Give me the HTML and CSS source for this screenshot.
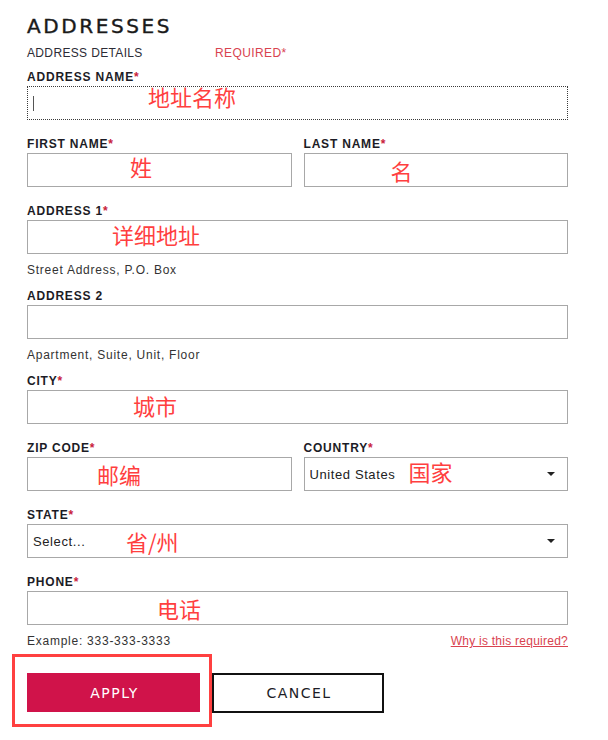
FILE: index.html
```html
<!DOCTYPE html>
<html lang="en">
<head>
    <meta charset="UTF-8">
    <meta name="viewport" content="width=device-width, initial-scale=1.0">
    <title>Addresses</title>
    <link rel="stylesheet" href="styles.css">
</head>
<body>

    <div class="page">
        <h1 class="title">ADDRESSES</h1>

        <div class="subhead">
            <span class="subhead-title">ADDRESS DETAILS</span>
            <span class="subhead-req">REQUIRED*</span>
        </div>

        <form class="address-form">
            <div class="field">
                <label class="label" for="address-name">ADDRESS NAME<span class="req">*</span></label>
                <div class="control">
                    <input class="input is-focused" type="text" id="address-name">
                    <span class="caret"></span>
                    <span class="note note-name">地址名称</span>
                </div>
            </div>

            <div class="row">
                <div class="field">
                    <label class="label" for="first-name">FIRST NAME<span class="req">*</span></label>
                    <div class="control">
                        <input class="input" type="text" id="first-name">
                        <span class="note note-first">姓</span>
                    </div>
                </div>
                <div class="field">
                    <label class="label" for="last-name">LAST NAME<span class="req">*</span></label>
                    <div class="control">
                        <input class="input" type="text" id="last-name">
                        <span class="note note-last">名</span>
                    </div>
                </div>
            </div>

            <div class="field has-hint">
                <label class="label" for="address1">ADDRESS 1<span class="req">*</span></label>
                <div class="control">
                    <input class="input" type="text" id="address1">
                    <span class="note note-address">详细地址</span>
                </div>
                <div class="hint">Street Address, P.O. Box</div>
            </div>

            <div class="field has-hint">
                <label class="label" for="address2">ADDRESS 2</label>
                <div class="control">
                    <input class="input" type="text" id="address2">
                </div>
                <div class="hint">Apartment, Suite, Unit, Floor</div>
            </div>

            <div class="field">
                <label class="label" for="city">CITY<span class="req">*</span></label>
                <div class="control">
                    <input class="input" type="text" id="city">
                    <span class="note note-city">城市</span>
                </div>
            </div>

            <div class="row">
                <div class="field">
                    <label class="label" for="zip">ZIP CODE<span class="req">*</span></label>
                    <div class="control">
                        <input class="input" type="text" id="zip">
                        <span class="note note-zip">邮编</span>
                    </div>
                </div>
                <div class="field">
                    <label class="label" for="country">COUNTRY<span class="req">*</span></label>
                    <div class="control has-arrow">
                        <select class="input select" id="country">
                            <option>United States</option>
                        </select>
                        <span class="note note-country">国家</span>
                    </div>
                </div>
            </div>

            <div class="field">
                <label class="label" for="state">STATE<span class="req">*</span></label>
                <div class="control has-arrow">
                    <select class="input select" id="state">
                        <option>Select...</option>
                    </select>
                    <span class="note note-state">省/州</span>
                </div>
            </div>

            <div class="field field-last">
                <label class="label" for="phone">PHONE<span class="req">*</span></label>
                <div class="control">
                    <input class="input" type="text" id="phone">
                    <span class="note note-phone">电话</span>
                </div>
                <div class="phone-meta">
                    <span class="hint">Example: 333-333-3333</span>
                    <a class="why-link" href="#">Why is this required?</a>
                </div>
            </div>

            <div class="actions">
                <div class="apply-wrap">
                    <button type="submit" class="btn btn-apply">APPLY</button>
                    <span class="highlight"></span>
                </div>
                <button type="button" class="btn btn-cancel">CANCEL</button>
            </div>
        </form>
    </div>

</body>
</html>
```

FILE: styles.css
```css
body {
    margin: 0;
    padding: 0;
    background-color: #fff;
    font-family: "Liberation Sans", Arial, sans-serif;
    color: #1c1c26;
}

.page {
    width: 541px;
    padding: 0 0 28px 27px;
}

.title {
    margin: 14px 0 0;
    font-family: "DejaVu Sans", sans-serif;
    font-size: 20px;
    font-weight: normal;
    line-height: 24px;
    letter-spacing: 2.6px;
    color: #1a1a1a;
    -webkit-text-stroke: 0.4px #1a1a1a;
}

.subhead {
    display: flex;
    margin-top: 7px;
    font-size: 12px;
    line-height: 16px;
}

.subhead-title {
    width: 188px;
    letter-spacing: 0.35px;
    color: #2c2c36;
}

.subhead-req {
    letter-spacing: 0.4px;
    color: #d9434f;
}

.address-form {
    margin-top: 8px;
}

.row {
    display: flex;
    gap: 12px;
}

.row .field {
    flex: 1;
}

.field {
    margin-bottom: 16px;
}

.field.has-hint {
    margin-bottom: 10px;
}

.field-last {
    margin-bottom: 0;
}

.label {
    display: block;
    margin-bottom: 1px;
    font-size: 12px;
    font-weight: bold;
    line-height: 16px;
    letter-spacing: 0.8px;
    color: #1c1c26;
}

.req {
    color: #c8213b;
}

.control {
    position: relative;
}

.input {
    display: block;
    width: 100%;
    height: 34px;
    margin: 0;
    padding: 0 5px;
    box-sizing: border-box;
    border: 1px solid #a8a8a8;
    border-radius: 0;
    background-color: #fff;
    font-family: "Liberation Sans", Arial, sans-serif;
    font-size: 13px;
    letter-spacing: 0.6px;
    color: #222;
    outline: none;
}

.input.is-focused {
    border: 1px dotted #3a3a3a;
}

.select {
    -webkit-appearance: none;
    appearance: none;
}

.has-arrow::after {
    content: "";
    position: absolute;
    right: 13px;
    top: 15px;
    border-left: 4px solid transparent;
    border-right: 4px solid transparent;
    border-top: 4px solid #222;
}

.caret {
    position: absolute;
    left: 6px;
    top: 10px;
    width: 1px;
    height: 15px;
    background-color: #555;
}

/* red annotations drawn over the fields */
.note {
    position: absolute;
    font-family: "Noto Sans CJK SC", sans-serif;
    font-size: 22px;
    line-height: 22px;
    color: #ff3f3f;
    white-space: nowrap;
    pointer-events: none;
}

.note-name { left: 121px; top: -1px; }
.note-first { left: 103px; top: 2px; }
.note-last { left: 87px; top: 6px; }
.note-address { left: 85px; top: 3px; }
.note-city { left: 106px; top: 4px; }
.note-zip { left: 70px; top: 6px; }
.note-country { left: 105px; top: 3px; }
.note-state { left: 99px; top: 6px; }
.note-phone { left: 130px; top: 6px; }

.hint {
    display: block;
    margin-top: 8px;
    font-size: 12px;
    line-height: 16px;
    letter-spacing: 0.75px;
    color: #333;
}

.phone-meta {
    display: flex;
    justify-content: space-between;
    align-items: flex-start;
}

.why-link {
    margin-top: 8px;
    font-size: 12px;
    line-height: 16px;
    letter-spacing: 0.25px;
    color: #d9434f;
    text-decoration: underline;
}

.actions {
    display: flex;
    align-items: flex-start;
    gap: 12px;
    margin-top: 24px;
}

.apply-wrap {
    position: relative;
}

.btn {
    display: block;
    margin: 0;
    padding: 0 0 0 2px;
    box-sizing: border-box;
    font-family: "DejaVu Sans", sans-serif;
    font-size: 14px;
    letter-spacing: 1.5px;
    cursor: pointer;
}

.btn-apply {
    width: 173px;
    height: 39px;
    border: none;
    background-color: #d0134a;
    color: #fff;
}

.btn-cancel {
    width: 172px;
    height: 40px;
    border: 2px solid #111;
    background-color: #fff;
    color: #1c1c26;
}

.highlight {
    position: absolute;
    left: -15px;
    top: -19px;
    width: 200px;
    height: 73px;
    box-sizing: border-box;
    border: 3px solid #ff4040;
    pointer-events: none;
}
```
